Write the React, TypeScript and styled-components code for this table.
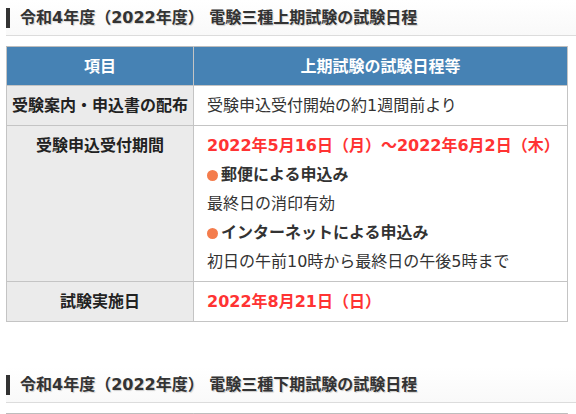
import React from "react";
import styled, { createGlobalStyle } from "styled-components";

const Global = createGlobalStyle`
  html, body { margin: 0; padding: 0; background: #fff; }
  body { font-family: "DejaVu Sans", "Noto Sans CJK JP", sans-serif; color: #333; }
`;

const Page = styled.div`
  padding: 0 0 0 6px;
`;

const Heading = styled.h3<{ $top?: number }>`
  margin: ${(p) => p.$top ?? 0}px 0 0 0;
  padding: 8px 0 7px 0;
  border-bottom: 1px solid #dcdcdc;
  background: linear-gradient(to bottom, #ffffff, #f9f9f9);
  font-size: 16px;
  font-weight: 700;
  color: #333;
  text-shadow: 1px 1px 1px rgba(0, 0, 0, 0.18);
`;

const HeadingInner = styled.span`
  display: block;
  border-left: 4px solid #333;
  padding-left: 10px;
  line-height: 20px;
`;

const Table = styled.table`
  margin-top: 10px;
  width: 562px;
  table-layout: fixed;
  border-collapse: collapse;
  border: 1px solid #bdbdbd;
  font-size: 16px;
  line-height: 29px;
`;

const Th = styled.th<{ $w?: number }>`
  background: #4682b4;
  color: #fff;
  font-weight: 700;
  text-align: center;
  height: 39px;
  padding: 0 12px;
  border: 1px solid #c4c4c4;
  border-top-color: #bdbdbd;
  ${(p) => (p.$w ? `width: ${p.$w}px;` : "")}
  box-sizing: border-box;
`;

const Label = styled.td`
  background: #ebebeb;
  color: #222;
  font-weight: 700;
  text-align: center;
  vertical-align: top;
  padding: 5px 0;
  border: 1px solid #c4c4c4;
  white-space: nowrap;
`;

const Cell = styled.td`
  background: #fff;
  color: #333;
  vertical-align: top;
  padding: 5px 12px 5px 13px;
  border: 1px solid #c4c4c4;
`;

const Line = styled.div<{ $red?: boolean; $bold?: boolean }>`
  color: ${(p) => (p.$red ? "#ff3333" : "#333")};
  font-weight: ${(p) => (p.$red || p.$bold ? 700 : 400)};
  white-space: nowrap;
`;

const Dot = styled.span`
  display: inline-block;
  width: 11px;
  height: 11px;
  border-radius: 50%;
  background: #f47c4c;
  margin-right: 3px;
  vertical-align: -1px;
`;

export default function App() {
  return (
    <Page>
      <Global />
      <Heading>
        <HeadingInner>令和4年度（2022年度） 電験三種上期試験の試験日程</HeadingInner>
      </Heading>
      <Table>
        <thead>
          <tr>
            <Th $w={187}>項目</Th>
            <Th>上期試験の試験日程等</Th>
          </tr>
        </thead>
        <tbody>
          <tr>
            <Label>受験案内・申込書の配布</Label>
            <Cell>
              <Line>受験申込受付開始の約1週間前より</Line>
            </Cell>
          </tr>
          <tr>
            <Label>受験申込受付期間</Label>
            <Cell>
              <Line $red>2022年5月16日（月）～2022年6月2日（木）</Line>
              <Line $bold>
                <Dot />
                郵便による申込み
              </Line>
              <Line>最終日の消印有効</Line>
              <Line $bold>
                <Dot />
                インターネットによる申込み
              </Line>
              <Line>初日の午前10時から最終日の午後5時まで</Line>
            </Cell>
          </tr>
          <tr>
            <Label>試験実施日</Label>
            <Cell>
              <Line $red>2022年8月21日（日）</Line>
            </Cell>
          </tr>
        </tbody>
      </Table>
      <Heading $top={45}>
        <HeadingInner>令和4年度（2022年度） 電験三種下期試験の試験日程</HeadingInner>
      </Heading>
      <Table>
        <thead>
          <tr>
            <Th $w={187}>項目</Th>
            <Th>下期試験の試験日程等</Th>
          </tr>
        </thead>
      </Table>
    </Page>
  );
}
